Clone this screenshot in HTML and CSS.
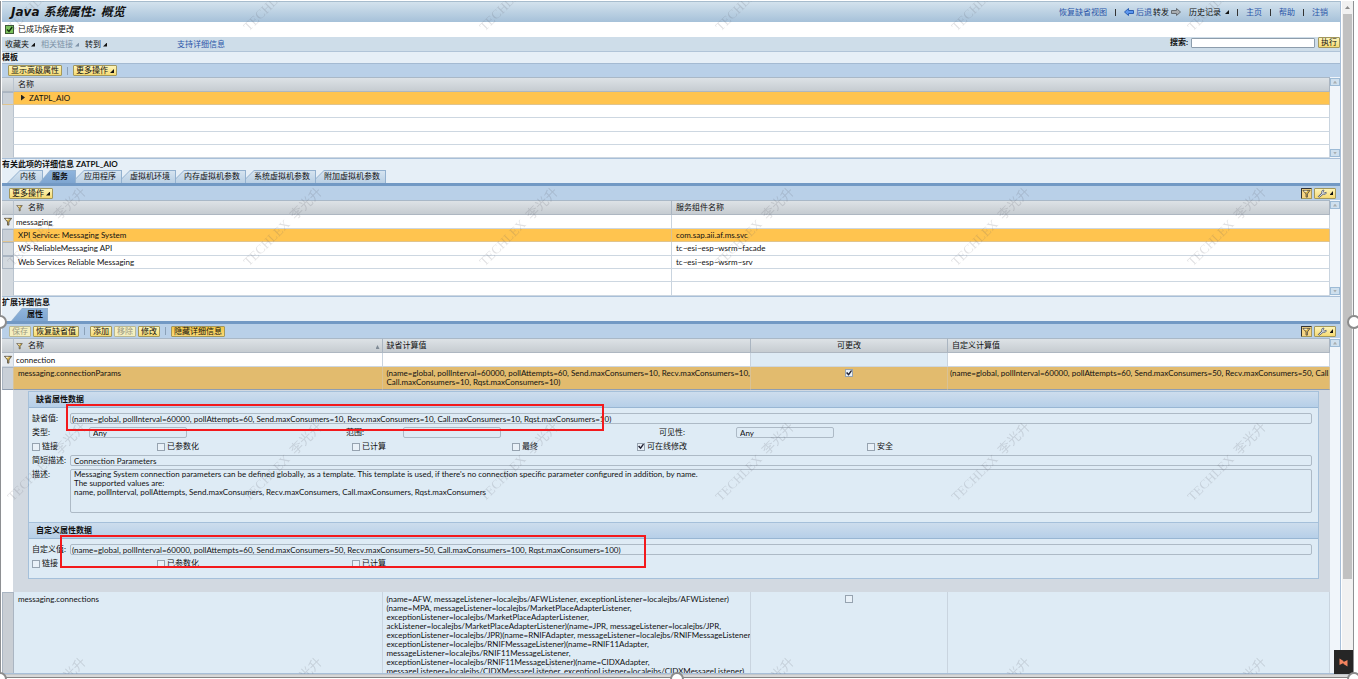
FILE: index.html
```
<!DOCTYPE html>
<html lang="zh-CN">
<head>
    <meta charset="UTF-8">
    <title>Java 系统属性: 概览</title>
    <link rel="stylesheet" href="styles.css">
</head>
<body>
<svg class="defs" width="0" height="0">
    <symbol id="funnel" viewBox="0 0 10 10">
        <path d="M1 1.500h8L6 5.500v3.500H4.500V5.500z" fill="#d9b64e" stroke="#5a5348" stroke-width="1"/>
        <path d="M2.500 2.500h3" stroke="#fff" stroke-width="1"/>
    </symbol>
    <symbol id="wrench" viewBox="0 0 12 10">
        <path d="M1.500 8.500l4-4M5.500 4.500C4.500 2 6.500.8 8 1.200L7.200 3l1.300 1.300 2-.6c.3 1.800-1.500 3-3.500 2.100L3 9.300 1.500 8.500z" fill="#d8dce4" stroke="#5c6473" stroke-width="1"/>
    </symbol>
</svg>
<div class="screen">
    <div class="viewport">
        <div class="app">
            <header class="title-bar">
                <h1>Java 系统属性: 概览</h1>
                <nav>
                    <a href="#">恢复缺省视图</a>
                    <i class="bar"></i>
                    <a href="#" class="back"><svg width="10" height="8" viewBox="0 0 10 8"><path d="M.5 4L4.500.5v2h5v3h-5v2z" fill="#5d97ee" stroke="#2c5fb4"/></svg>后退</a>
                    <a href="#" class="forward">转发<svg width="10" height="8" viewBox="0 0 10 8"><path d="M9.500 4L5.500.5v2h-5v3h5v2z" fill="#a9adb1" stroke="#666c72"/></svg></a>
                    <a href="#" class="history">历史记录<i class="tri"></i></a>
                    <i class="bar"></i>
                    <a href="#">主页</a>
                    <i class="bar"></i>
                    <a href="#">帮助</a>
                    <i class="bar"></i>
                    <a href="#">注销</a>
                </nav>
            </header>
            <div class="message">
                <svg width="9" height="9" viewBox="0 0 9 9"><rect x=".5" y=".5" width="8" height="8" fill="#7cc35c" stroke="#3f5a37"/><path d="M2 4.500l2 2L7.200 2" fill="none" stroke="#14300e" stroke-width="1.400"/></svg>
                已成功保存更改
            </div>
            <div class="menu-bar">
                <a href="#">收藏夹<i class="tri"></i></a>
                <a href="#" class="off">相关链接<i class="tri"></i></a>
                <a href="#">转到<i class="tri"></i></a>
                <a href="#" class="support">支持详细信息</a>
                <form class="search">
                    <label for="search">搜索:</label>
                    <input type="text" id="search">
                    <button type="button">执行</button>
                </form>
            </div>

            <h2>模板</h2>
            <div class="toolbar first">
                <button type="button">显示高级属性</button>
                <i class="sep"></i>
                <button type="button">更多操作<i class="tri"></i></button>
            </div>
            <div class="grid">
                <table>
                    <thead>
                    <tr><th class="sel"></th><th class="plain">名称</th></tr>
                    </thead>
                    <tbody>
                    <tr class="current"><td class="sel key"></td><td><i class="expand"></i>ZATPL_AIO</td></tr>
                    <tr><td class="sel"></td><td></td></tr>
                    <tr><td class="sel"></td><td></td></tr>
                    <tr><td class="sel"></td><td></td></tr>
                    <tr><td class="sel"></td><td></td></tr>
                    </tbody>
                </table>
                <div class="rail"><i class="up"></i><i class="down"></i></div>
            </div>

            <h2>有关此项的详细信息 ZATPL_AIO</h2>
            <div class="tabs">
                <button type="button" class="lead"><span>内核</span></button>
                <button type="button" class="active"><span>服务</span></button>
                <button type="button"><span>应用程序</span></button>
                <button type="button"><span>虚拟机环境</span></button>
                <button type="button"><span>内存虚拟机参数</span></button>
                <button type="button"><span>系统虚拟机参数</span></button>
                <button type="button"><span>附加虚拟机参数</span></button>
            </div>
            <div class="toolbar">
                <button type="button">更多操作<i class="tri"></i></button>
                <div class="tools">
                    <button type="button" class="filter" aria-label="过滤器"><svg width="9" height="9"><use href="#funnel"/></svg></button>
                    <button type="button" class="setup" aria-label="设置"><svg width="12" height="9"><use href="#wrench"/></svg><i class="tri"></i></button>
                </div>
            </div>
            <div class="grid">
                <table>
                    <thead>
                    <tr><th class="sel"></th><th><svg width="7" height="8"><use href="#funnel"/></svg>名称</th><th class="plain">服务组件名称</th></tr>
                    </thead>
                    <tbody>
                    <tr class="query">
                        <td class="icon"><svg width="10" height="9"><use href="#funnel"/></svg></td>
                        <td><input type="text" value="messaging" aria-label="名称"></td>
                        <td><input type="text" aria-label="服务组件名称"></td>
                    </tr>
                    <tr class="current"><td class="sel key"></td><td>XPI Service: Messaging System</td><td>com.sap.aii.af.ms.svc</td></tr>
                    <tr><td class="sel key"></td><td>WS-ReliableMessaging API</td><td>tc~esi~esp~wsrm~facade</td></tr>
                    <tr><td class="sel key"></td><td>Web Services Reliable Messaging</td><td>tc~esi~esp~wsrm~srv</td></tr>
                    <tr><td class="sel"></td><td></td><td></td></tr>
                    <tr><td class="sel"></td><td></td><td></td></tr>
                    </tbody>
                </table>
                <div class="rail"><i class="up"></i><i class="down"></i></div>
            </div>

            <h2>扩展详细信息</h2>
            <div class="tabs">
                <button type="button" class="active only"><span>属性</span></button>
            </div>
            <div class="toolbar">
                <button type="button" disabled>保存</button>
                <button type="button">恢复缺省值</button>
                <i class="sep"></i>
                <button type="button">添加</button>
                <button type="button" disabled>移除</button>
                <button type="button">修改</button>
                <i class="sep"></i>
                <button type="button" class="pressed">隐藏详细信息</button>
                <div class="tools">
                    <button type="button" class="filter" aria-label="过滤器"><svg width="9" height="9"><use href="#funnel"/></svg></button>
                    <button type="button" class="setup" aria-label="设置"><svg width="12" height="9"><use href="#wrench"/></svg><i class="tri"></i></button>
                </div>
            </div>
            <div class="grid props">
                <table>
                    <colgroup>
                        <col class="c-sel"><col><col><col class="c-flag"><col class="c-custom">
                    </colgroup>
                    <thead>
                    <tr>
                        <th class="sel"></th>
                        <th><svg width="7" height="8"><use href="#funnel"/></svg>名称<i class="sort"></i></th>
                        <th class="plain">缺省计算值</th>
                        <th class="center">可更改</th>
                        <th class="plain">自定义计算值</th>
                    </tr>
                    </thead>
                    <tbody>
                    <tr class="query">
                        <td class="icon"><svg width="10" height="9"><use href="#funnel"/></svg></td>
                        <td><input type="text" value="connection" aria-label="名称"></td>
                        <td><input type="text" aria-label="缺省计算值"></td>
                        <td class="closed"></td>
                        <td><input type="text" aria-label="自定义计算值"></td>
                    </tr>
                    <tr class="current open">
                        <td class="sel key"></td>
                        <td>messaging.connectionParams</td>
                        <td>(name=global, pollInterval=60000, pollAttempts=60, Send.maxConsumers=10, Recv.maxConsumers=10,<br>Call.maxConsumers=10, Rqst.maxConsumers=10)</td>
                        <td class="center"><input type="checkbox" checked aria-label="可更改"></td>
                        <td>(name=global, pollInterval=60000, pollAttempts=60, Send.maxConsumers=50, Recv.maxConsumers=50, Call.maxConsumers=100, Rqst.maxConsumers=100)</td>
                    </tr>
                    <tr class="detail">
                        <td></td>
                        <td colspan="4">
                            <section class="box">
                                <h3>缺省属性数据</h3>
                                <div class="fields">
                                    <div class="line">
                                        <label for="def">缺省值:</label>
                                        <input type="text" id="def" class="tight" readonly value="(name=global, pollInterval=60000, pollAttempts=60, Send.maxConsumers=10, Recv.maxConsumers=10, Call.maxConsumers=10, Rqst.maxConsumers=10)">
                                    </div>
                                    <div class="trio">
                                        <div><label for="type">类型:</label><input type="text" id="type" readonly value="Any"></div>
                                        <div><label for="range">范围:</label><input type="text" id="range" readonly></div>
                                        <div class="last"><label for="vis">可见性:</label><input type="text" id="vis" readonly value="Any"></div>
                                    </div>
                                    <div class="checks">
                                        <label><input type="checkbox">链接</label>
                                        <label><input type="checkbox">已参数化</label>
                                        <label><input type="checkbox">已计算</label>
                                        <label><input type="checkbox">最终</label>
                                        <label><input type="checkbox" checked>可在线修改</label>
                                        <label><input type="checkbox">安全</label>
                                    </div>
                                    <div class="line">
                                        <label for="short">简短描述:</label>
                                        <input type="text" id="short" readonly value="Connection Parameters">
                                    </div>
                                    <div class="line">
                                        <label for="desc">描述:</label>
                                        <textarea id="desc" readonly>Messaging System connection parameters can be defined globally, as a template. This template is used, if there's no connection specific parameter configured in addition, by name.
The supported values are:
name, pollInterval, pollAttempts, Send.maxConsumers, Recv.maxConsumers, Call.maxConsumers, Rqst.maxConsumers</textarea>
                                    </div>
                                </div>
                                <i class="mark mark-default"></i>
                            </section>
                            <section class="box">
                                <h3>自定义属性数据</h3>
                                <div class="fields">
                                    <div class="line">
                                        <label for="custom">自定义值:</label>
                                        <input type="text" id="custom" class="tight" readonly value="(name=global, pollInterval=60000, pollAttempts=60, Send.maxConsumers=50, Recv.maxConsumers=50, Call.maxConsumers=100, Rqst.maxConsumers=100)">
                                    </div>
                                    <div class="checks">
                                        <label><input type="checkbox">链接</label>
                                        <label><input type="checkbox">已参数化</label>
                                        <label><input type="checkbox">已计算</label>
                                    </div>
                                </div>
                                <i class="mark mark-custom"></i>
                            </section>
                        </td>
                    </tr>
                    <tr class="long">
                        <td class="sel key"></td>
                        <td>messaging.connections</td>
                        <td>(name=AFW, messageListener=localejbs/AFWListener, exceptionListener=localejbs/AFWListener)<br>(name=MPA, messageListener=localejbs/MarketPlaceAdapterListener,<br>exceptionListener=localejbs/MarketPlaceAdapterListener,<br>ackListener=localejbs/MarketPlaceAdapterListener)(name=JPR, messageListener=localejbs/JPR,<br>exceptionListener=localejbs/JPR)(name=RNIFAdapter, messageListener=localejbs/RNIFMessageListener,<br>exceptionListener=localejbs/RNIFMessageListener)(name=RNIF11Adapter,<br>messageListener=localejbs/RNIF11MessageListener,<br>exceptionListener=localejbs/RNIF11MessageListener)(name=CIDXAdapter,<br>messageListener=localejbs/CIDXMessageListener, exceptionListener=localejbs/CIDXMessageListener)</td>
                        <td class="center"><input type="checkbox" aria-label="可更改"></td>
                        <td></td>
                    </tr>
                    </tbody>
                </table>
                <div class="rail"><i class="up"></i></div>
            </div>
            <svg class="watermark" width="100%" height="100%">
                <pattern id="stamp" width="236" height="235" x="-73" y="-127" patternUnits="userSpaceOnUse">
                    <text x="118" y="122" text-anchor="middle" transform="rotate(-45 118 118)">TECHLEX&#160; 李光升</text>
                </pattern>
                <rect width="100%" height="100%" fill="url(#stamp)"/>
            </svg>
        </div>
        <div class="page-scroll"><i class="arrow"></i><i class="thumb"></i></div>
        <button type="button" class="badge" aria-label="助手"><svg width="9" height="9" viewBox="0 0 9 9"><path d="M.5.5l4 2.500V5l-4 2zM8.500 2v6.500l-4-2.500V4z" fill="#f4845f"/></svg></button>
    </div>
    <div class="foot"></div>
    <i class="handle left middle"></i>
    <i class="handle right middle"></i>
    <i class="handle left bottom"></i>
    <i class="handle center bottom"></i>
    <i class="handle right bottom"></i>
</div>
</body>
</html>
```
FILE: styles.css
```
* {
    margin: 0;
    padding: 0;
    box-sizing: border-box;
}

body, button, input, textarea {
    font: 8px/9px Lato, "Liberation Sans", "Noto Sans CJK SC", sans-serif;
    color: #111;
}

body {
    background: #fff;
    overflow: hidden;
}

a {
    color: #2b55a8;
    text-decoration: none;
}

.defs {
    position: absolute;
}

.screen {
    position: relative;
    display: flex;
    flex-direction: column;
    height: 100vh;
    padding: 1px 4px 1px 0;
    overflow: hidden;
}

.viewport {
    position: relative;
    flex: 1;
    display: flex;
    min-height: 0;
    border-left: 1px solid #8e9093;
    border-right: 1px solid #8e9093;
    padding-left: 1px;
}

.foot {
    height: 4px;
    background: #d8d8d8;
    border-top: 1px solid #c2c6ca;
    border-bottom: 1px solid #858585;
}

.app {
    position: relative;
    flex: 1;
    min-width: 0;
    display: flex;
    flex-direction: column;
    overflow: hidden;
    background: #e6eff7;
    border-right: 1px solid #a8bfd8;
}

.app > * {
    flex-shrink: 0;
}

/* title */
.title-bar {
    height: 21px;
    display: flex;
    align-items: center;
    justify-content: space-between;
    padding: 0 12px 0 9px;
    border-top: 1px solid #a7bccd;
    background: linear-gradient(#d3e2ed, #a6c1d9);
}

h1 {
    font: italic bold 12px/18px "DejaVu Sans", "Noto Sans CJK SC", sans-serif;
    color: #111;
}

.title-bar nav {
    display: flex;
    align-items: center;
    gap: 8px;
}

.title-bar nav a {
    display: flex;
    align-items: center;
    gap: 2px;
}

.title-bar nav .forward {
    margin-left: -7px;
    color: #111;
}

.title-bar nav .history {
    color: #111;
}

.bar {
    width: 1px;
    height: 7px;
    background: #333;
}

.tri {
    display: inline-block;
    width: 4px;
    height: 4px;
    margin-left: 2px;
    background: currentColor;
    clip-path: polygon(100% 0, 100% 100%, 0 100%);
}

.message {
    height: 15px;
    display: flex;
    align-items: center;
    gap: 4px;
    padding-left: 3px;
    background: #fff;
}

.menu-bar {
    height: 15px;
    display: flex;
    align-items: center;
    gap: 6px;
    padding-left: 3px;
    background: #cedde9;
    border-bottom: 1px solid #b0c4d8;
}

.menu-bar a {
    color: #111;
}

.menu-bar .off {
    color: #7e93a8;
}

.menu-bar .support {
    color: #2b55a8;
    margin-left: 64px;
}

.search {
    display: flex;
    align-self: flex-start;
    align-items: center;
    gap: 3px;
    margin-left: auto;
}

.search label {
    font-weight: bold;
}

.search input {
    width: 124px;
    height: 10px;
    border: 1px solid #8d9dac;
    border-radius: 1px;
    background: #fff;
}

h2 {
    height: 11px;
    font-size: 8px;
    line-height: 11px;
}

/* buttons */
.toolbar button, .search button {
    height: 11px;
    padding: 0 2px;
    border: 1px solid #a3985c;
    border-radius: 1px;
    background: linear-gradient(#fdf4b8, #f6da72);
    white-space: nowrap;
}

.toolbar button:disabled {
    color: #9b9a83;
    border-color: #b9b894;
    background: #f5efbf;
}

.toolbar .pressed {
    background: linear-gradient(#f3c748, #fbd975);
}

.toolbar {
    display: flex;
    align-items: center;
    gap: 2px;
    height: 17px;
    padding: 0 4px 0 7px;
    background: #b9d0e8;
    border-top: 3px solid #7299c4;
}

.toolbar.first {
    height: 14px;
    padding-left: 6px;
    border-top: 1px solid #a4bad2;
}

.sep {
    width: 1px;
    height: 8px;
    margin: 0 3px;
    background: #8ba1b8;
}

.tools {
    display: flex;
    align-items: center;
    gap: 2px;
    margin-left: auto;
}

.tools button {
    display: flex;
    align-items: center;
    justify-content: center;
}

.toolbar .filter {
    width: 11px;
    padding: 0;
    border-color: #333 #a3985c #a3985c #333;
    background: #f6d583;
}

.toolbar .setup {
    width: 22px;
    padding: 0 2px;
}

/* tabs */
.tabs {
    display: flex;
    height: 13px;
    padding-left: 5px;
}

.tabs button {
    position: relative;
    height: 13px;
    padding: 0 6px 0 8px;
    border: none;
    background: #93b1cf;
    clip-path: polygon(8px 0, 100% 0, 100% 100%, 0 100%, 0 8px);
}

.tabs button::before {
    content: "";
    position: absolute;
    inset: 1px 1px 0 0;
    background: linear-gradient(#d6e4f0, #b9cfe4);
    clip-path: polygon(8px 0, 100% 0, 100% 100%, 0 100%, 0 8px);
}

.tabs button span {
    position: relative;
}

.tabs button.lead {
    padding: 0 7px 0 13px;
    clip-path: polygon(13px 0, 100% 0, 100% 100%, 0 100%);
}

.tabs button.lead::before {
    clip-path: polygon(13px 0, 100% 0, 100% 100%, 1px 100%);
}

.tabs button.active {
    margin-left: -4px;
    padding: 0 8px 0 13px;
    font-weight: bold;
    clip-path: polygon(11px 0, 100% 0, 100% 100%, 0 100%);
}

.tabs button.only {
    margin-left: 4px;
    padding: 0 5px 0 16px;
}

.tabs button.active::before {
    background: linear-gradient(#8fb4dc, #7ea5d0);
    clip-path: polygon(11px 0, 100% 0, 100% 100%, 1px 100%);
}

/* tables */
.grid {
    display: flex;
    background: #fff;
    border-bottom: 1px solid #a8bfd8;
}

.grid table {
    flex: 1;
    width: 0;
    table-layout: fixed;
    border-spacing: 0;
}

.grid th {
    height: 15px;
    padding: 0 2px;
    text-align: left;
    font-weight: normal;
    background: linear-gradient(#dde2e6, #c6ccd1);
    border-top: 1px solid #a9b8c7;
    border-right: 1px solid #aab5c1;
    border-bottom: 1px solid #aeb7c1;
    white-space: nowrap;
}

.grid th svg {
    margin-right: 5px;
    vertical-align: middle;
}

.grid .plain {
    padding-left: 4px;
}

.grid td {
    height: 13px;
    padding: 0 4px;
    border-right: 1px solid #c9d4df;
    border-bottom: 1px solid #cdd7e1;
    white-space: nowrap;
    overflow: hidden;
}

.grid tbody tr:nth-child(3n) td {
    height: 14px;
}

.grid .sel {
    width: 12px;
    padding: 0;
    border-right-color: #b9c3ce;
}

.grid td.sel {
    background: #d3d9df;
    border-bottom-color: #d3d9df;
}

.grid td.key {
    border: 1px solid #aab5c2;
}

.grid .current td {
    background: #ffc44f;
    border-bottom-color: #e0c48e;
    border-right-color: #d9c295;
}

.grid .current td.sel {
    background: #c9d0d8;
}

.grid .query td {
    height: 14px;
    padding: 0 1px;
}

.grid .query .icon {
    background: #e6ebf0;
}

.query svg {
    display: block;
}

.query input {
    display: block;
    width: 100%;
    height: 11px;
    padding-left: 1px;
    border: none;
    background: none;
}

.grid .query .closed {
    background: #deebf5;
}

.center {
    text-align: center !important;
}

.expand {
    display: inline-block;
    width: 4px;
    height: 6px;
    margin: 0 4px 0 3px;
    background: #222;
    clip-path: polygon(0 0, 100% 50%, 0 100%);
}

.sort {
    float: right;
    width: 4px;
    height: 4px;
    margin-top: 4px;
    background: #7f8a95;
    clip-path: polygon(50% 0, 100% 100%, 0 100%);
}

.rail {
    width: 10px;
    display: flex;
    flex-direction: column;
    justify-content: space-between;
    padding: 1px 0;
    background: #f0f5fa;
}

.rail i {
    height: 8px;
    border: 1px solid #9dbbd6;
    background: #cfe0ee;
    display: flex;
    align-items: center;
    justify-content: center;
}

.rail i::before {
    content: "";
    width: 4px;
    height: 3px;
    background: #a9aeb0;
    clip-path: polygon(50% 0, 100% 100%, 0 100%);
}

.rail .down::before {
    clip-path: polygon(0 0, 100% 0, 50% 100%);
}

/* property table */
.c-sel { width: 12px; }
.c-flag { width: 197px; }
.c-custom { width: 382px; }

.grid.props {
    flex: 1;
    min-height: 0;
    overflow: hidden;
    align-items: stretch;
}

.props table {
    align-self: flex-start;
}

.grid .open td {
    height: 23px;
    padding-top: 2px;
    vertical-align: top;
    background: #e2bb6e;
    border-bottom: 1px solid #8f9db0;
}

.grid .open td:last-child {
    padding-left: 2px;
}

.grid .detail td {
    border-bottom: none;
    border-right-color: #d2d9e1;
}

.grid .detail td + td {
    padding: 1px 10px 13px 14px;
    background: #d2d9e1;
    white-space: normal;
}

.grid .long td {
    height: 92px;
    padding-top: 3px;
    vertical-align: top;
    background: #deebf5;
}

.grid .long td.sel {
    background: #c9ced4;
}

/* detail form */
.box {
    position: relative;
    background: #deebf5;
    border: 1px solid #a5c0da;
    border-bottom: none;
}

.box:last-child {
    border-bottom: 1px solid #a5c0da;
}

h3 {
    height: 16px;
    padding-left: 7px;
    font-size: 8px;
    line-height: 15px;
    border-bottom: 1px solid #98b6d3;
    background: linear-gradient(#cddded, #b6cfe8);
}

.fields {
    display: flex;
    flex-direction: column;
    gap: 3px;
    padding: 5px 6px 9px 3px;
}

.line {
    display: flex;
}

.line label {
    width: 38px;
    line-height: 11px;
    white-space: nowrap;
}

.box input[type=text], textarea {
    height: 11px;
    padding: 0 3px;
    border: 1px solid #adbac6;
    border-radius: 2px;
    background: transparent;
}

.line input, .line textarea {
    flex: 1;
    min-width: 0;
}

.box input.tight {
    padding: 0 1px;
}

.box textarea {
    height: 44px;
    resize: none;
}

.trio {
    display: grid;
    grid-template-columns: 314fr 313fr 653fr;
}

.trio div {
    display: flex;
    align-items: center;
}

.trio label {
    width: 57px;
}

.trio .last label {
    width: 77px;
}

.trio input {
    width: 98px;
}

.checks {
    display: grid;
    grid-template-columns: 125fr 195fr 160fr 125fr 230fr 445fr;
    height: 11px;
    align-items: center;
}

.checks label {
    display: flex;
    align-items: center;
    gap: 2px;
}

input[type=checkbox] {
    appearance: none;
    width: 8px;
    height: 8px;
    border: 1px solid #96a3b0;
    background: #e9f1f8;
    vertical-align: top;
}

input[type=checkbox]:checked::after {
    content: "";
    display: block;
    width: 6px;
    height: 6px;
    background: #223;
    clip-path: polygon(0 50%, 20% 35%, 42% 60%, 85% 0, 100% 15%, 45% 95%);
}

.mark {
    position: absolute;
    border: 2px solid #f3191c;
}

.mark-default {
    left: 37px;
    top: 12px;
    width: 538px;
    height: 27px;
}

.mark-custom {
    left: 31px;
    top: 12px;
    width: 586px;
    height: 33px;
}

/* overlays */
.watermark {
    position: absolute;
    inset: 0;
    pointer-events: none;
}

.watermark text {
    font: 13px "Liberation Serif", "Noto Sans CJK SC", serif;
    fill: rgba(90, 90, 100, .18);
}

.page-scroll {
    width: 11px;
    display: flex;
    flex-direction: column;
    align-items: center;
    margin-left: 1px;
    background: #f1f1f1;
}

.page-scroll .arrow {
    width: 5px;
    height: 3px;
    margin: 5px 0;
    background: #8c8c8c;
    clip-path: polygon(50% 0, 100% 100%, 0 100%);
}

.page-scroll .thumb {
    width: 9px;
    height: 84%;
    background: #c1c1c1;
}

.badge {
    position: absolute;
    right: 0;
    bottom: 0;
    width: 19px;
    height: 24px;
    display: flex;
    align-items: center;
    justify-content: center;
    border: none;
    background: #262626;
}

.handle {
    position: absolute;
    width: 14px;
    height: 14px;
    border: 2px solid #8c8c8c;
    border-radius: 50%;
    background: #fff;
}

.left { left: -7px; }
.right { right: -3px; }
.handle.center { left: 50%; margin-left: -9px; }
.middle { top: 315px; }
.bottom { bottom: -7px; }
```
